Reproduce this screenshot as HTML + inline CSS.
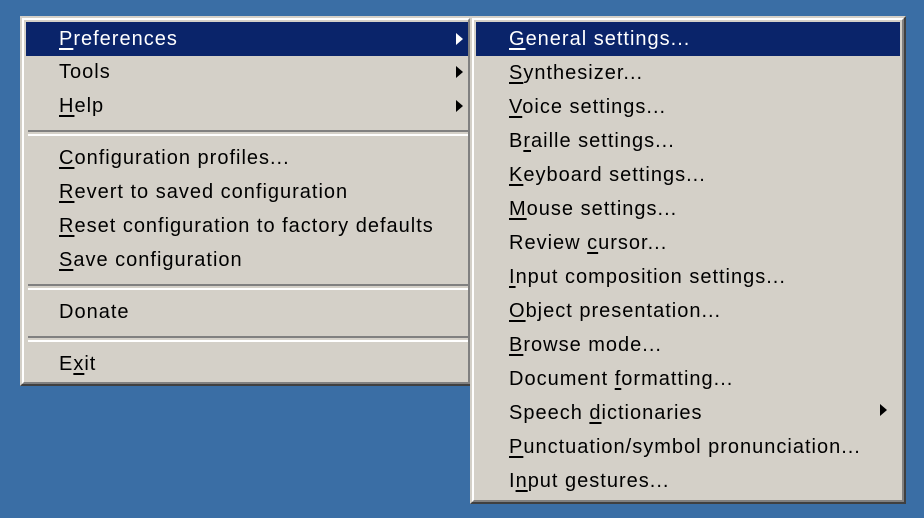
<!DOCTYPE html>
<html><head><style>
body{margin:0;width:924px;height:518px;background:#3a6ea5;position:relative;overflow:hidden;font-family:"Liberation Sans",sans-serif;}
.m{position:absolute;background:#d4d0c8;box-sizing:border-box;border-top:2px solid #d4d0c8;border-left:2px solid #d4d0c8;border-right:2px solid #404040;border-bottom:2px solid #404040;}
.m:before{content:"";position:absolute;left:0;top:0;right:0;bottom:0;border-top:2px solid #fff;border-left:2px solid #fff;border-right:2px solid #808080;border-bottom:2px solid #808080;}
.i{position:absolute;height:34px;line-height:35px;font-size:20px;letter-spacing:1px;color:#000;white-space:nowrap;}
.i u{text-decoration:underline;text-underline-offset:3px;}
.hl{position:absolute;background:#0a246a;}
.sep{position:absolute;height:2px;border-top:2px solid #808080;border-bottom:2px solid #fff;}
.ar{position:absolute;width:0;height:0;border-top:6px solid transparent;border-bottom:6px solid transparent;border-left:7px solid #000;}
</style></head><body>
<div class="m" style="left:20px;top:16px;width:452px;height:370px"></div>
<div class="hl" style="left:26px;top:22px;width:442px;height:34px"></div>
<div class="i" style="left:59px;top:22px;color:#fff"><u>P</u>references</div>
<div class="ar" style="left:456px;top:33px;border-left-color:#fff"></div>
<div class="i" style="left:59px;top:55px">Tools</div>
<div class="ar" style="left:456px;top:66px"></div>
<div class="i" style="left:59px;top:89px"><u>H</u>elp</div>
<div class="ar" style="left:456px;top:100px"></div>
<div class="sep" style="left:28px;top:130px;width:440px"></div>
<div class="i" style="left:59px;top:141px"><u>C</u>onfiguration profiles...</div>
<div class="i" style="left:59px;top:175px"><u>R</u>evert to saved configuration</div>
<div class="i" style="left:59px;top:209px"><u>R</u>eset configuration to factory defaults</div>
<div class="i" style="left:59px;top:243px"><u>S</u>ave configuration</div>
<div class="sep" style="left:28px;top:284px;width:440px"></div>
<div class="i" style="left:59px;top:295px">Donate</div>
<div class="sep" style="left:28px;top:336px;width:440px"></div>
<div class="i" style="left:59px;top:347px">E<u>x</u>it</div>

<div class="m" style="left:470px;top:16px;width:436px;height:488px"></div>
<div class="hl" style="left:476px;top:22px;width:424px;height:34px"></div>
<div class="i" style="left:509px;top:22px;color:#fff"><u>G</u>eneral settings...</div>
<div class="i" style="left:509px;top:56px"><u>S</u>ynthesizer...</div>
<div class="i" style="left:509px;top:90px"><u>V</u>oice settings...</div>
<div class="i" style="left:509px;top:124px">B<u>r</u>aille settings...</div>
<div class="i" style="left:509px;top:158px"><u>K</u>eyboard settings...</div>
<div class="i" style="left:509px;top:192px"><u>M</u>ouse settings...</div>
<div class="i" style="left:509px;top:226px">Review <u>c</u>ursor...</div>
<div class="i" style="left:509px;top:260px"><u>I</u>nput composition settings...</div>
<div class="i" style="left:509px;top:294px"><u>O</u>bject presentation...</div>
<div class="i" style="left:509px;top:328px"><u>B</u>rowse mode...</div>
<div class="i" style="left:509px;top:362px">Document <u>f</u>ormatting...</div>
<div class="i" style="left:509px;top:396px">Speech <u>d</u>ictionaries</div>
<div class="ar" style="left:880px;top:404px"></div>
<div class="i" style="left:509px;top:430px"><u>P</u>unctuation/symbol pronunciation...</div>
<div class="i" style="left:509px;top:464px">I<u>n</u>put gestures...</div>
</body></html>
